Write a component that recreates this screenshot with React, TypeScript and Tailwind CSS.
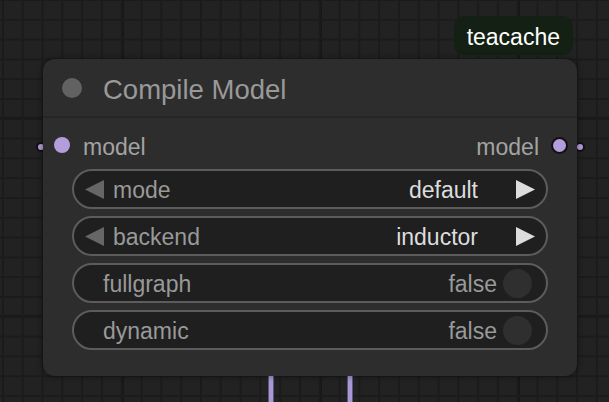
import React from "react";

// grid canvas + one litegraph-style node

const LeftArrow = ({ color }: { color: string }) => (
    <svg width="19" height="19" viewBox="0 0 19 19" className="shrink-0">
        <polygon points="19,0 19,19 0,9.5" fill={color} />
    </svg>
);

const RightArrow = ({ color }: { color: string }) => (
    <svg width="19" height="19" viewBox="0 0 19 19" className="shrink-0">
        <polygon points="0,0 0,19 19,9.5" fill={color} />
    </svg>
);

const ComboWidget = ({ label, value }: { label: string; value: string }) => (
    <div className="flex items-center h-[40px] rounded-full border-2 border-[#5c5c5c] bg-[#1f1f1f] pl-[11px] pr-[11px]">
        <LeftArrow color="#666666" />
        <span className="ml-[9px] pt-[3px] text-[#999999]">{label}</span>
        <span className="flex-1" />
        <span className="pt-[3px] text-[#dddddd]">{value}</span>
        <span className="ml-[38px]">
            <RightArrow color="#dddddd" />
        </span>
    </div>
);

const ToggleWidget = ({ label }: { label: string }) => (
    <div className="flex items-center h-[40px] rounded-full border-2 border-[#5c5c5c] bg-[#1f1f1f] pl-[29px] pr-[14px]">
        <span className="flex-1 pt-[3px] text-[#999999]">{label}</span>
        <span className="pt-[3px] text-[#999999]">false</span>
        <span className="ml-[6px] w-[29px] h-[29px] rounded-full bg-[#2f2f2f]" />
    </div>
);

export default function App() {
    return (
        <div
            className="
        w-[609px] h-[402px] overflow-hidden
        bg-[#222222]
        [background-image:linear-gradient(to_right,#1b1b1b_2px,transparent_2px),linear-gradient(to_bottom,#1b1b1b_2px,transparent_2px),linear-gradient(to_right,#171717_3px,transparent_3px),linear-gradient(to_bottom,#171717_3px,transparent_3px)]
        [background-size:19.8px_19.8px,19.8px_19.8px,198px_198px,198px_198px]
        [background-position:2px_0px,2px_-1px,121px_0px,0px_117px]
        font-['Liberation_Sans',Arial,sans-serif]
      "
        >
            <div className="ml-[43px] w-[534px] flex flex-col">
                {/* group badge */}
                <div className="self-end mr-[4px] mt-[16px] h-[39px] px-[13px] pt-[3px] rounded-[10px] bg-[#142014] text-white text-[23px] flex items-center">
                    teacache
                </div>

                <div className="relative mt-[4px]">
                    {/* link endpoints behind the node */}
                    <span className="absolute left-[-7px] top-[83px] w-[10px] h-[10px] rounded-full bg-[#b39ddb] border-2 border-[#111111]" />
                    <span className="absolute left-[532px] top-[83px] w-[10px] h-[10px] rounded-full bg-[#b39ddb] border-2 border-[#111111]" />

                    {/* node */}
                    <div className="relative z-10 h-[317px] rounded-[12px] bg-[#2d2d2d] shadow-[0_0_6px_rgba(0,0,0,0.45)] flex flex-col">
                        <div className="h-[59px] flex items-center pl-[19px] border-b-2 border-[#262626]">
                            <span className="w-[20px] h-[20px] rounded-full bg-[#626262]" />
                            <span className="ml-[21px] pt-[4px] text-[27.5px] text-[#999999]">Compile Model</span>
                        </div>

                        <div className="flex items-center h-[40px] mt-[7px] pl-[11px] pr-[9px] text-[23px]">
                            <span className="w-[16px] h-[16px] rounded-full bg-[#b39ddb]" />
                            <span className="ml-[13px] pt-[4px] text-[#a3a3a3]">model</span>
                            <span className="flex-1" />
                            <span className="mr-[12px] pt-[4px] text-[#a3a3a3]">model</span>
                            <span className="w-[17px] h-[17px] rounded-full bg-[#b39ddb] border-2 border-[#111111]" />
                        </div>

                        <div className="flex flex-col gap-[7px] mt-[4px] px-[29px] text-[23px]">
                            <ComboWidget label="mode" value="default" />
                            <ComboWidget label="backend" value="inductor" />
                            <ToggleWidget label="fullgraph" />
                            <ToggleWidget label="dynamic" />
                        </div>
                    </div>
                </div>

                {/* links leaving downwards */}
                <div className="flex h-[30px] pl-[225px]">
                    <span className="w-[6px] bg-[#a898d6] border-x border-[#5e537a]" />
                    <span className="ml-[73px] w-[6px] bg-[#a898d6] border-x border-[#5e537a]" />
                </div>
            </div>
        </div>
    );
}
